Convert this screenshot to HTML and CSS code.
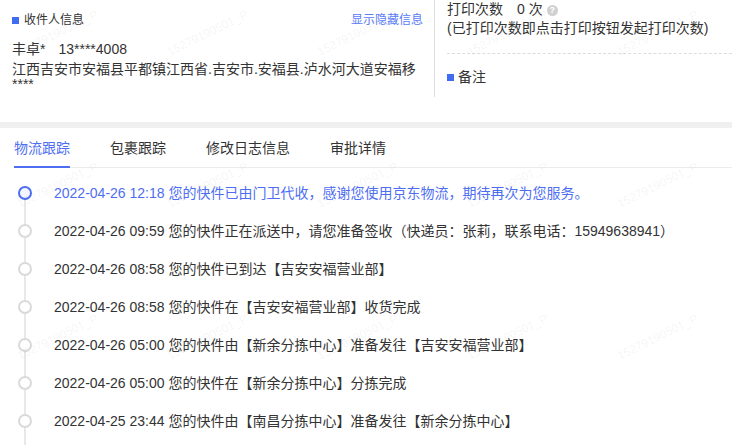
FILE: index.html
```html
<!DOCTYPE html>
<html lang="zh-CN">
<head>
<meta charset="utf-8">
<title>物流跟踪</title>
<link rel="stylesheet" href="styles.css">
</head>
<body>
<div class="page">
  <section class="top">
    <div class="receiver">
      <div class="rc-head">
        <div class="sec-title small"><i class="sq"></i>收件人信息</div>
        <a class="link">显示隐藏信息</a>
      </div>
      <div class="rc-name">丰卓*<span class="phone">13****4008</span></div>
      <div class="rc-addr">江西吉安市安福县平都镇江西省.吉安市.安福县.泸水河大道安福移****</div>
    </div>
    <div class="side">
      <div class="print">
        <div>打印次数<span class="cnt">0 次</span><span class="qmark">?</span></div>
        <div>(已打印次数即点击打印按钮发起打印次数)</div>
      </div>
      <div class="sec-title note"><i class="sq"></i>备注</div>
    </div>
  </section>
  <div class="band"></div>
  <nav class="tabs">
    <span class="tab active">物流跟踪</span>
    <span class="tab">包裹跟踪</span>
    <span class="tab">修改日志信息</span>
    <span class="tab">审批详情</span>
  </nav>
  <ul class="timeline">
    <li class="item current"><i class="dot"></i><span>2022-04-26 12:18 您的快件已由门卫代收，感谢您使用京东物流，期待再次为您服务。</span></li>
    <li class="item"><i class="dot"></i><span>2022-04-26 09:59 您的快件正在派送中，请您准备签收（快递员：张莉，联系电话：15949638941）</span></li>
    <li class="item"><i class="dot"></i><span>2022-04-26 08:58 您的快件已到达【吉安安福营业部】</span></li>
    <li class="item"><i class="dot"></i><span>2022-04-26 08:58 您的快件在【吉安安福营业部】收货完成</span></li>
    <li class="item"><i class="dot"></i><span>2022-04-26 05:00 您的快件由【新余分拣中心】准备发往【吉安安福营业部】</span></li>
    <li class="item"><i class="dot"></i><span>2022-04-26 05:00 您的快件在【新余分拣中心】分拣完成</span></li>
    <li class="item"><i class="dot"></i><span>2022-04-25 23:44 您的快件由【南昌分拣中心】准备发往【新余分拣中心】</span></li>
  </ul>
  <div class="watermark">
    <span>15279190501_P</span><span>15279190501_P</span><span>15279190501_P</span><span>15279190501_P</span><span>15279190501_P</span>
    <span>15279190501_P</span><span>15279190501_P</span><span>15279190501_P</span><span>15279190501_P</span><span>15279190501_P</span>
    <span>15279190501_P</span><span>15279190501_P</span><span>15279190501_P</span><span>15279190501_P</span><span>15279190501_P</span>
  </div>
</div>
</body>
</html>
```
FILE: styles.css
```css
* { box-sizing: border-box; }
html, body { margin: 0; padding: 0; background: #fff; }
body {
  font-family: "Liberation Sans", "Noto Sans CJK SC", sans-serif;
  font-size: 14px;
  color: #333;
}
.page { position: relative; width: 732px; height: 445px; overflow: hidden; }

.top { display: flex; height: 122px; }
.receiver {
  width: 435px;
  height: 97px;
  border-right: 1px solid #ddd;
  padding: 12px 11px 0 12px;
}
.rc-head { display: flex; justify-content: space-between; align-items: center; height: 16px; }
.sec-title { display: flex; align-items: center; }
.sec-title.small { font-size: 12px; line-height: 16px; }
.sq { display: inline-block; flex: none; width: 7px; height: 7px; background: #3f6cf0; margin-right: 5px; }
.link { font-size: 12px; color: #5a7cf6; line-height: 16px; }
.rc-name { margin-top: 11px; line-height: 20px; }
.phone { margin-left: 13px; }
.rc-addr { margin-top: 3px; line-height: 15px; }

.side { flex: 1; padding-left: 12px; }
.print { line-height: 19px; padding-bottom: 15px; border-bottom: 1px dashed #dcdcdc; }
.cnt { margin-left: 14px; }
.qmark {
  display: inline-flex; align-items: center; justify-content: center;
  width: 11px; height: 11px; border-radius: 50%;
  background: #d0d0d0; color: #fff; font-size: 9px; font-weight: bold;
  margin-left: 4px; vertical-align: 1px; line-height: 11px;
}
.note { margin-top: 13px; line-height: 20px; }
.note .sq { margin-right: 4px; }

.band { height: 6px; background: #f0f0f0; }

.tabs {
  display: flex; gap: 40px;
  margin: 0 0 0 14px;
  padding-top: 10px;
  border-bottom: 1px solid #ececec;
}
.tab {
  line-height: 20px;
  padding-bottom: 8px;
  border-bottom: 2px solid transparent;
  margin-bottom: -1px;
  color: #333;
}
.tab.active { color: #4e6ef2; border-bottom-color: #4e6ef2; }

.timeline { list-style: none; margin: 0; padding: 6px 0 0 0; position: relative; }
.timeline::before {
  content: ""; position: absolute; left: 24px; top: 30px; bottom: -40px;
  width: 2px; background: #e8e8e8;
}
.item { display: flex; align-items: center; height: 38px; line-height: 20px; }
.dot {
  position: relative;
  width: 14px; height: 14px; border-radius: 50%;
  border: 2px solid #dadada; background: #fff;
  margin-left: 18px; margin-right: 22px; flex: none;
}
.item.current { color: #4e6ef2; }
.item.current .dot { border-color: #4e6ef2; background: #f4f6ff; }

.watermark {
  position: absolute; inset: 0; pointer-events: none;
  display: grid; grid-template-columns: repeat(5, 150px); grid-auto-rows: 152px;
}
.watermark span {
  font-size: 12px; color: rgba(0,0,0,0.06);
  transform: translate(15px, 46px) rotate(-26deg);
  transform-origin: left top;
  align-self: start; justify-self: start;
  white-space: nowrap;
}
```
